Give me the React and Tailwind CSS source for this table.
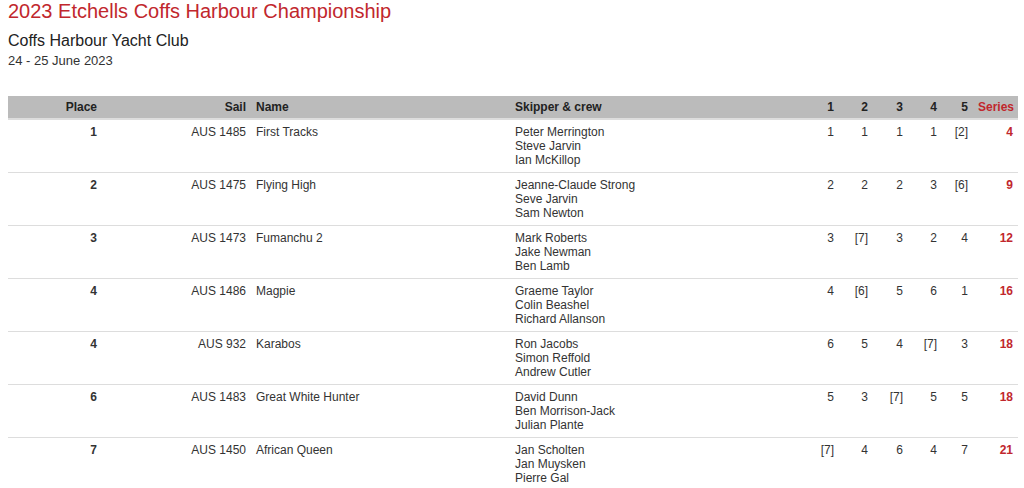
const rows = [
  { place: 1, sail: "AUS 1485", name: "First Tracks", crew: ["Peter Merrington", "Steve Jarvin", "Ian McKillop"], races: ["1", "1", "1", "1", "[2]"], series: 4 },
  { place: 2, sail: "AUS 1475", name: "Flying High", crew: ["Jeanne-Claude Strong", "Seve Jarvin", "Sam Newton"], races: ["2", "2", "2", "3", "[6]"], series: 9 },
  { place: 3, sail: "AUS 1473", name: "Fumanchu 2", crew: ["Mark Roberts", "Jake Newman", "Ben Lamb"], races: ["3", "[7]", "3", "2", "4"], series: 12 },
  { place: 4, sail: "AUS 1486", name: "Magpie", crew: ["Graeme Taylor", "Colin Beashel", "Richard Allanson"], races: ["4", "[6]", "5", "6", "1"], series: 16 },
  { place: 4, sail: "AUS 932", name: "Karabos", crew: ["Ron Jacobs", "Simon Reffold", "Andrew Cutler"], races: ["6", "5", "4", "[7]", "3"], series: 18 },
  { place: 6, sail: "AUS 1483", name: "Great White Hunter", crew: ["David Dunn", "Ben Morrison-Jack", "Julian Plante"], races: ["5", "3", "[7]", "5", "5"], series: 18 },
  { place: 7, sail: "AUS 1450", name: "African Queen", crew: ["Jan Scholten", "Jan Muysken", "Pierre Gal"], races: ["[7]", "4", "6", "4", "7"], series: 21 },
];

const raceWidths = ["w-[34px]", "w-[34px]", "w-[35px]", "w-[34px]", "w-[31px]"];

export default function App() {
  return (
    <div className="min-h-[488px] bg-white px-2 text-[#333] font-['Liberation_Sans',Arial,sans-serif]">
      <h1 className="text-[20px] leading-[20px] text-[#c1272d] pt-[1px]">
        2023 Etchells Coffs Harbour Championship
      </h1>
      <h2 className="mt-[11px] text-[16px] leading-[18px] text-[#222]">Coffs Harbour Yacht Club</h2>
      <div className="mt-[3px] text-[13px] leading-[16px]">24 - 25 June 2023</div>

      <table className="mt-[27px] w-[1010px] table-fixed border-collapse text-[12px] leading-[14px]">
        <colgroup>
          <col className="w-[94px]" />
          <col className="w-[149px]" />
          <col className="w-[259px]" />
          <col className="w-[295px]" />
          {raceWidths.map((w, i) => (
            <col key={i} className={w} />
          ))}
          <col className="w-[45px]" />
        </colgroup>
        <thead>
          <tr className="bg-[#bbbbbb] border-b-2 border-[#dddddd] text-[#222] font-bold">
            <th className="h-[23px] px-[5px] text-right">Place</th>
            <th className="px-[5px] text-right">Sail</th>
            <th className="px-[5px] text-left">Name</th>
            <th className="px-[5px] text-left">Skipper &amp; crew</th>
            {[1, 2, 3, 4, 5].map((n) => (
              <th key={n} className="px-[5px] text-right">{n}</th>
            ))}
            <th className="px-[5px] text-right text-[#c1272d]">Series</th>
          </tr>
        </thead>
        <tbody>
          {rows.map((r, i) => (
            <tr key={i} className="border-b border-[#dddddd] align-top">
              <td className="px-[5px] pt-[5px] pb-[5px] text-right font-bold">{r.place}</td>
              <td className="px-[5px] pt-[5px] pb-[5px] text-right">{r.sail}</td>
              <td className="px-[5px] pt-[5px] pb-[5px]">{r.name}</td>
              <td className="px-[5px] pt-[5px] pb-[5px]">
                {r.crew.map((c) => (
                  <div key={c}>{c}</div>
                ))}
              </td>
              {r.races.map((v, j) => (
                <td key={j} className="px-[5px] pt-[5px] pb-[5px] text-right">{v}</td>
              ))}
              <td className="px-[5px] pt-[5px] pb-[5px] text-right font-bold text-[#c1272d]">{r.series}</td>
            </tr>
          ))}
        </tbody>
      </table>
    </div>
  );
}
